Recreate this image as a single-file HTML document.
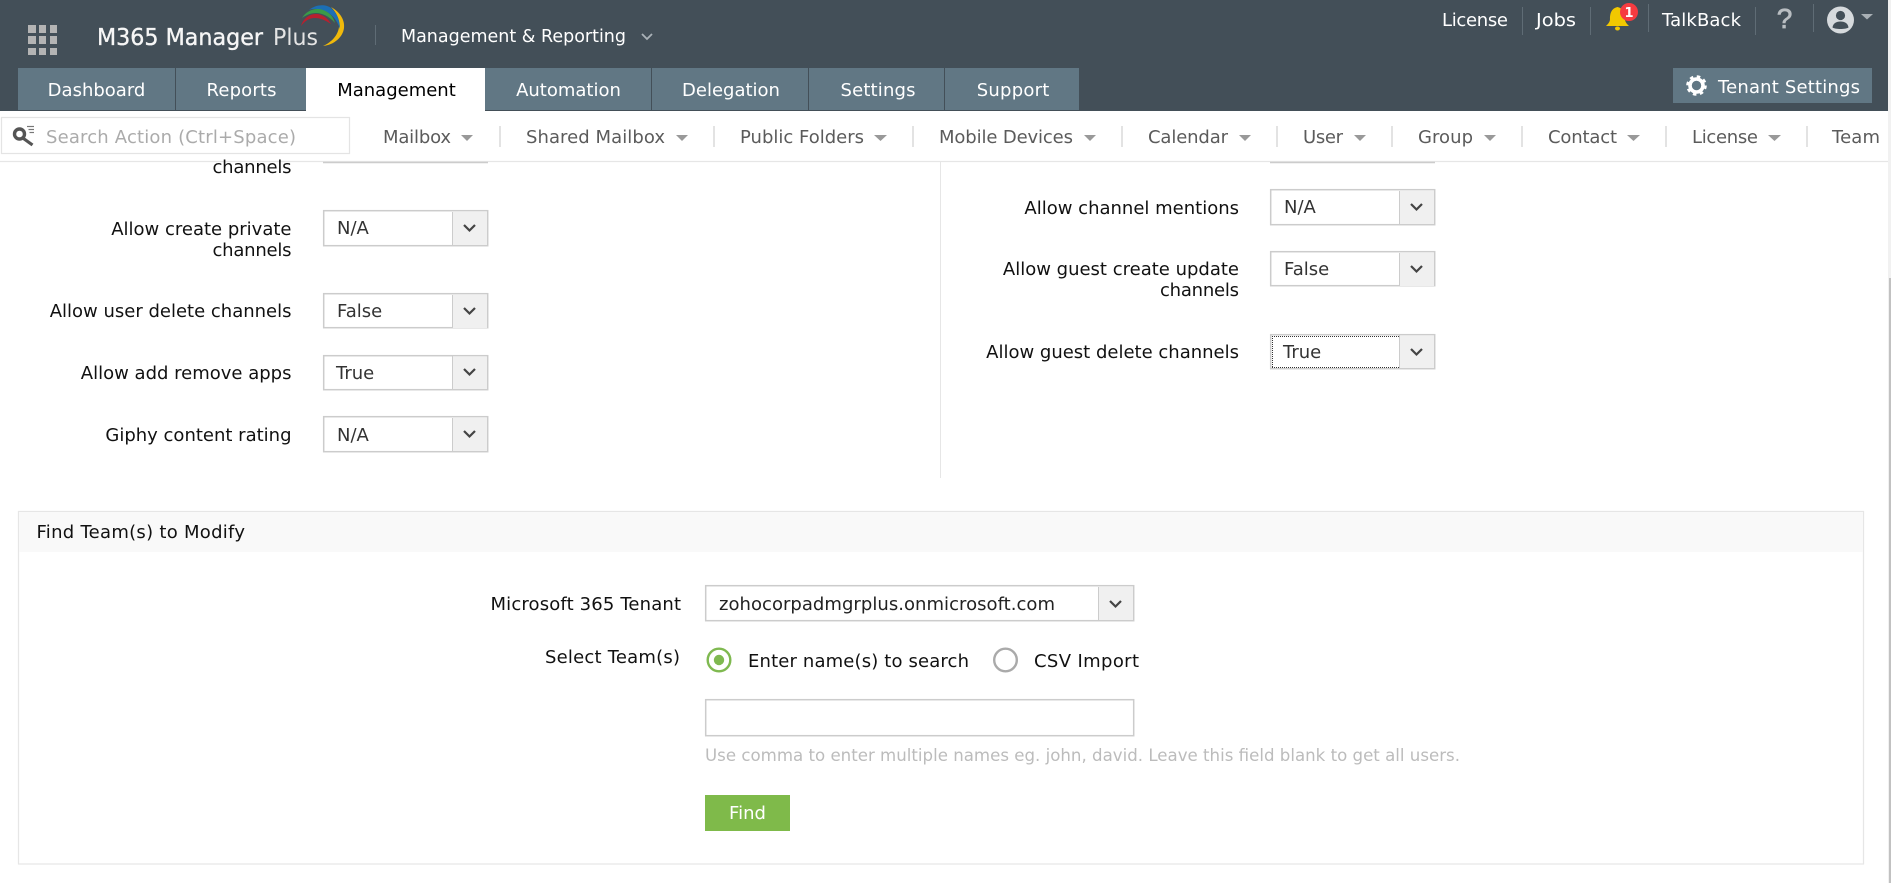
<!DOCTYPE html>
<html lang="en">
<head>
<meta charset="utf-8">
<title>M365 Manager Plus</title>
<style>
html,body{margin:0;padding:0;background:#fff;width:1891px;height:883px;overflow:hidden}
svg{display:block}
text{font-family:"DejaVu Sans","Liberation Sans",sans-serif;font-size:18px;white-space:pre}
.h{fill:#fff}
.t{fill:#fff;text-anchor:middle}
.n{fill:#5b5b5b}
.l{fill:#111;text-anchor:end}
.v{fill:#333}
.box{fill:#fff;stroke:#ccc;stroke-width:1.5}
.arr{fill:#f0f0f0}
.cv{fill:none;stroke:#444;stroke-width:2.2}
.sep{stroke:#e3e3e3;stroke-width:2}
.hs{stroke:#5f6c75;stroke-width:1}
.car{fill:#999}
</style>
</head>
<body>
<svg width="1891" height="883" viewBox="0 0 1891 883" xmlns="http://www.w3.org/2000/svg">
<!-- scrollbar -->
<rect x="1888" y="0" width="3" height="883" fill="#f1f1f1"/>
<rect x="1889" y="278" width="2" height="605" fill="#c1c1c1"/>

<!-- header -->
<rect x="0" y="0" width="1888" height="111" fill="#434f58"/>
<g fill="#b4b4b4">
<rect x="28" y="25" width="8" height="8"/><rect x="39" y="25" width="7" height="8"/><rect x="50" y="25" width="7" height="8"/>
<rect x="28" y="36" width="8" height="8"/><rect x="39" y="36" width="7" height="8"/><rect x="50" y="36" width="7" height="8"/>
<rect x="28" y="48" width="8" height="7"/><rect x="39" y="48" width="7" height="7"/><rect x="50" y="48" width="7" height="7"/>
</g>
<text x="97" y="45" style="font-size:23px" fill="#f6f6f6" stroke="#f6f6f6" stroke-width="0.35" textLength="166" lengthAdjust="spacingAndGlyphs">M365 Manager</text>
<text x="273" y="45" style="font-size:23px" fill="#e4e4e4" textLength="45" lengthAdjust="spacingAndGlyphs">Plus</text>
<path d="M331 7C340 12 345 20 344 28C343 37 334 45 323 46C332 42 338 35 339 27C340 19 336 12 331 7Z" fill="#f0b90b"/>
<path d="M309 10C316 4 326 4 331 8C337 13 340 20 340 29C337 20 332 14 325 11C320 9 314 8 309 10Z" fill="#1c6fb5"/>
<path d="M302 18C306 11 315 7 323 10C328 12 333 15 335 23C329 16 322 13 316 13C311 13 306 15 302 18Z" fill="#3a9a48"/>
<path d="M301 26C303 19 309 14 316 14C322 14 328 18 331 24C325 20 320 18 315 18C309 18 305 21 301 26Z" fill="#b8202f"/>
<line x1="375.5" y1="25" x2="375.5" y2="45" stroke="#5f6c75"/>
<text class="h" x="401" y="42" textLength="225" lengthAdjust="spacingAndGlyphs">Management &amp; Reporting</text>
<polyline points="642,34 647,39 652,34" fill="none" stroke="#aab2b8" stroke-width="1.8"/>

<!-- top links -->
<text class="h" x="1442" y="26" textLength="66">License</text>
<line class="hs" x1="1522.5" y1="7" x2="1522.5" y2="35"/>
<text class="h" x="1536" y="26" textLength="40" lengthAdjust="spacingAndGlyphs">Jobs</text>
<line class="hs" x1="1590.5" y1="7" x2="1590.5" y2="35"/>
<path d="M1617.5 7C1611 8.5 1610 14 1610 19C1610 22 1608 24 1606 26L1629 26C1627 24 1625 22 1625 19C1625 14 1624 8.5 1617.5 7Z" fill="#f2c800"/>
<ellipse cx="1617.5" cy="28.5" rx="2.5" ry="2" fill="#f2c800"/>
<circle cx="1629" cy="12" r="9" fill="#f63b40"/>
<text x="1629" y="17" text-anchor="middle" style="font-size:13px;font-weight:bold" fill="#fff">1</text>
<line class="hs" x1="1648.5" y1="4" x2="1648.5" y2="32"/>
<text class="h" x="1662" y="26" textLength="79">TalkBack</text>
<line class="hs" x1="1755.5" y1="7" x2="1755.5" y2="35"/>
<text x="1784.5" y="28" text-anchor="middle" style="font-family:'Liberation Sans',sans-serif;font-size:28px" fill="#b9bec2" stroke="#b9bec2" stroke-width="0.7">?</text>
<line class="hs" x1="1813.5" y1="4" x2="1813.5" y2="32"/>
<circle cx="1840.5" cy="20" r="13.5" fill="#d6dadd"/>
<circle cx="1840.5" cy="15.5" r="4.6" fill="#434f58"/>
<path d="M1832.5 27.5C1833 23.5 1836 21.5 1840.5 21.5C1845 21.5 1848 23.5 1848.5 27.5C1846 29.5 1835 29.5 1832.5 27.5Z" fill="#434f58"/>
<polygon class="car" points="1861,14 1873,14 1867,19.5" style="fill:#a9b0b5"/>

<!-- tabs -->
<rect x="18" y="68" width="1061" height="42" fill="#617784"/>
<g stroke="#434f58" stroke-width="1">
<line x1="175.5" y1="68" x2="175.5" y2="110"/>
<line x1="651.5" y1="68" x2="651.5" y2="110"/>
<line x1="808.5" y1="68" x2="808.5" y2="110"/>
<line x1="944.5" y1="68" x2="944.5" y2="110"/>
</g>
<rect x="306" y="68" width="179" height="43" fill="#fff"/>
<text class="t" x="96.5" y="96">Dashboard</text>
<text class="t" x="241.5" y="96" textLength="70">Reports</text>
<text class="t" x="396.5" y="96" style="fill:#000">Management</text>
<text class="t" x="568.5" y="96">Automation</text>
<text class="t" x="731" y="96">Delegation</text>
<text class="t" x="878" y="96" textLength="75">Settings</text>
<text class="t" x="1013" y="96" textLength="72.5">Support</text>

<!-- tenant settings -->
<rect x="1673" y="68" width="199" height="35" fill="#617784"/>
<circle cx="1696.5" cy="85.5" r="6.5" fill="none" stroke="#fff" stroke-width="3.6"/>
<circle cx="1696.5" cy="85.5" r="9" fill="none" stroke="#fff" stroke-width="2.6" stroke-dasharray="3.5 3.57"/>
<text class="h" x="1718" y="93" textLength="142">Tenant Settings</text>

<!-- sub nav -->
<rect x="1.5" y="117.5" width="348" height="36" fill="#fff" stroke="#e4e4e4" stroke-width="1.2"/>
<circle cx="19.5" cy="134" r="5" fill="none" stroke="#555" stroke-width="3.4"/>
<line x1="23.5" y1="138.5" x2="32.5" y2="145" stroke="#555" stroke-width="3.2"/>
<g stroke="#777" stroke-width="1.2">
<line x1="27" y1="126.5" x2="34" y2="126.5"/><line x1="28.5" y1="129.5" x2="34" y2="129.5"/><line x1="29.5" y1="132.5" x2="34" y2="132.5"/>
</g>
<text x="46" y="143" fill="#ababab" textLength="250">Search Action (Ctrl+Space)</text>

<text class="n" x="383" y="143" textLength="68">Mailbox</text>
<polygon class="car" points="461,135 473,135 467,141"/>
<line class="sep" x1="500" y1="126" x2="500" y2="147"/>
<text class="n" x="526" y="143" textLength="139">Shared Mailbox</text>
<polygon class="car" points="676,135 688,135 682,141"/>
<line class="sep" x1="714" y1="126" x2="714" y2="147"/>
<text class="n" x="740" y="143" textLength="124">Public Folders</text>
<polygon class="car" points="874,135 887,135 880.5,141"/>
<line class="sep" x1="913" y1="126" x2="913" y2="147"/>
<text class="n" x="939" y="143" textLength="134">Mobile Devices</text>
<polygon class="car" points="1084,135 1096,135 1090,141"/>
<line class="sep" x1="1122" y1="126" x2="1122" y2="147"/>
<text class="n" x="1148" y="143" textLength="80">Calendar</text>
<polygon class="car" points="1239,135 1251,135 1245,141"/>
<line class="sep" x1="1277" y1="126" x2="1277" y2="147"/>
<text class="n" x="1303" y="143" textLength="40">User</text>
<polygon class="car" points="1354,135 1366,135 1360,141"/>
<line class="sep" x1="1392" y1="126" x2="1392" y2="147"/>
<text class="n" x="1418" y="143" textLength="55">Group</text>
<polygon class="car" points="1484,135 1496,135 1490,141"/>
<line class="sep" x1="1522" y1="126" x2="1522" y2="147"/>
<text class="n" x="1548" y="143" textLength="69">Contact</text>
<polygon class="car" points="1627,135 1640,135 1633.5,141"/>
<line class="sep" x1="1666" y1="126" x2="1666" y2="147"/>
<text class="n" x="1692" y="143" textLength="66">License</text>
<polygon class="car" points="1768,135 1781,135 1774.5,141"/>
<line class="sep" x1="1807" y1="126" x2="1807" y2="147"/>
<text class="n" x="1832" y="143" textLength="48">Team</text>
<line x1="0" y1="161.5" x2="1888" y2="161.5" stroke="#e6e6e6" stroke-width="1.2"/>

<!-- partial selects -->
<line x1="323" y1="162.5" x2="488" y2="162.5" stroke="#ccc" stroke-width="1.4"/>
<line x1="1270" y1="162.5" x2="1435" y2="162.5" stroke="#ccc" stroke-width="1.4"/>

<!-- left column -->
<text class="l" x="291.5" y="173" textLength="79">channels</text>
<text class="l" x="291.5" y="235">Allow create private</text>
<text class="l" x="291.5" y="256" textLength="79">channels</text>
<rect class="box" x="323.7" y="210.7" width="164" height="35"/><rect class="arr" x="452" y="212" width="35" height="33"/><line x1="452.5" y1="212" x2="452.5" y2="245" stroke="#ccc"/><polyline class="cv" points="464,225 469.5,230.5 475,225"/>
<text class="v" x="337" y="234">N/A</text>

<text class="l" x="291.5" y="317">Allow user delete channels</text>
<rect class="box" x="323.7" y="293.7" width="164" height="34"/><rect class="arr" x="452" y="295" width="35" height="33"/><line x1="452.5" y1="295" x2="452.5" y2="328" stroke="#ccc"/><polyline class="cv" points="464,308 469.5,313.5 475,308"/>
<text class="v" x="337" y="317">False</text>

<text class="l" x="291.5" y="379">Allow add remove apps</text>
<rect class="box" x="323.7" y="355.7" width="164" height="34"/><rect class="arr" x="452" y="357" width="35" height="32"/><line x1="452.5" y1="356" x2="452.5" y2="390" stroke="#ccc"/><polyline class="cv" points="464,369 469.5,374.5 475,369"/>
<text class="v" x="336" y="379">True</text>

<text class="l" x="291.5" y="441">Giphy content rating</text>
<rect class="box" x="323.7" y="416.7" width="164" height="35"/><rect class="arr" x="452" y="418" width="35" height="33"/><line x1="452.5" y1="418" x2="452.5" y2="451" stroke="#ccc"/><polyline class="cv" points="464,431 469.5,436.5 475,431"/>
<text class="v" x="337" y="441">N/A</text>

<!-- divider -->
<line x1="940.5" y1="162" x2="940.5" y2="478" stroke="#e6e6e6"/>

<!-- right column -->
<text class="l" x="1239" y="214">Allow channel mentions</text>
<rect class="box" x="1270.7" y="189.7" width="164" height="35"/><rect class="arr" x="1399" y="191" width="35" height="33"/><line x1="1399.5" y1="191" x2="1399.5" y2="224" stroke="#ccc"/><polyline class="cv" points="1411,204 1416.5,209.5 1422,204"/>
<text class="v" x="1284" y="213">N/A</text>

<text class="l" x="1239" y="275">Allow guest create update</text>
<text class="l" x="1239" y="296" textLength="79">channels</text>
<rect class="box" x="1270.7" y="251.7" width="164" height="34"/><rect class="arr" x="1399" y="253" width="35" height="33"/><line x1="1399.5" y1="253" x2="1399.5" y2="286" stroke="#ccc"/><polyline class="cv" points="1411,266 1416.5,271.5 1422,266"/>
<text class="v" x="1284" y="275">False</text>

<text class="l" x="1239" y="358">Allow guest delete channels</text>
<rect class="box" x="1270.7" y="334.7" width="164" height="34"/><rect class="arr" x="1399" y="336" width="35" height="32"/><line x1="1399.5" y1="335" x2="1399.5" y2="369" stroke="#ccc"/><polyline class="cv" points="1411,349 1416.5,354.5 1422,349"/>
<g fill="none" stroke="#333" stroke-width="1" stroke-dasharray="1 1">
<line x1="1272" y1="336.5" x2="1399" y2="336.5"/>
<line x1="1272" y1="367.5" x2="1399" y2="367.5"/>
<line x1="1272.5" y1="336" x2="1272.5" y2="368"/>
</g>
<text class="v" x="1283" y="358">True</text>

<!-- panel -->
<rect x="18.5" y="511.5" width="1845" height="352.5" fill="#fff" stroke="#e6e6e6" stroke-width="1.2"/>
<rect x="19" y="512" width="1844" height="40" fill="#f9f9f9"/>
<text x="36.5" y="538" fill="#111" textLength="208.5">Find Team(s) to Modify</text>

<text class="l" x="681" y="610" textLength="190.5">Microsoft 365 Tenant</text>
<rect class="box" x="705.7" y="585.7" width="428" height="35"/><rect class="arr" x="1098" y="587" width="35" height="33"/><line x1="1098.5" y1="587" x2="1098.5" y2="620" stroke="#ccc"/><polyline class="cv" points="1110,601 1115.5,606.5 1121,601"/>
<text x="719" y="610" fill="#222" textLength="336">zohocorpadmgrplus.onmicrosoft.com</text>

<text class="l" x="680" y="663" textLength="135">Select Team(s)</text>
<circle cx="719" cy="660" r="11.3" fill="#fff" stroke="#7fb950" stroke-width="2.4"/>
<circle cx="719" cy="660" r="5.2" fill="#7fb950"/>
<text x="748" y="667" fill="#111" textLength="221">Enter name(s) to search</text>
<circle cx="1005.5" cy="660" r="11.3" fill="#fff" stroke="#aaa" stroke-width="2.4"/>
<text x="1034" y="667" fill="#111" textLength="105">CSV Import</text>

<rect class="box" x="705.7" y="699.7" width="428" height="36"/>
<text x="705" y="761" fill="#bcbcbc" style="font-size:16.6px" textLength="755" lengthAdjust="spacingAndGlyphs">Use comma to enter multiple names eg. john, david. Leave this field blank to get all users.</text>

<rect x="705" y="795" width="85" height="36" fill="#7fba4a"/>
<text x="747.5" y="819" text-anchor="middle" fill="#fff">Find</text>
</svg>
</body>
</html>
